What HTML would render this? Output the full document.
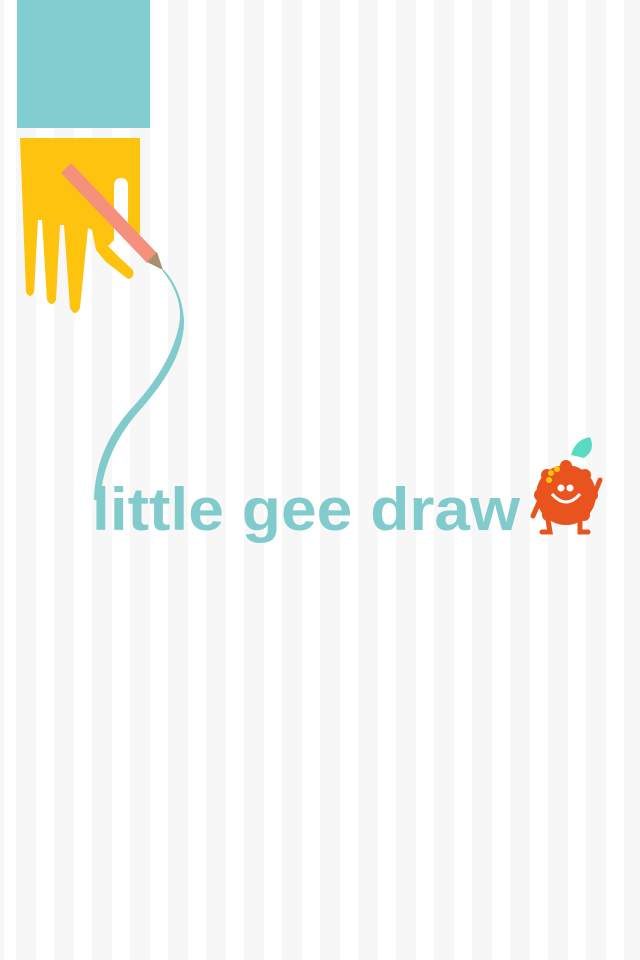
<!DOCTYPE html>
<html><head><style>
html,body{margin:0;padding:0}
body{width:640px;height:960px;overflow:hidden;background:#fff repeating-linear-gradient(90deg,#f7f7f7 0 20px,#fff 20px 38px);background-position:16px 0}
</style></head><body>
<svg width="640" height="960" style="position:absolute;left:0;top:0">
<rect x="17" y="0" width="133" height="128" fill="#82cdd0"/>
<g fill="#fdc30f">
<path d="M20 138 H140 V232 Q140 238 134 238 Q128 238 128 232 V186 Q128 178 121 178 Q114 178 114 186 V240 L108 246 L120 258 L133 270 Q135 278 128 279 L106 262 L96 250 L92 230 L88 228 L80 308 Q75 318 70 308 L64 225 L60 225 L56 300 Q52 308 47 300 L42 220 L38 220 L34 292 Q30 300 26 292 Z"/>
</g>
<path d="M66 168 L152 258" stroke="#f4907b" stroke-width="14"/>
<path d="M147 262 L157 252 L163 270 Z" fill="#a8906f"/>
<path d="M162 270 Q186 300 178 330 Q168 370 130 410 Q95 450 94 500 L100 500 Q104 450 140 410 Q185 360 184 320 Q182 290 164 270 Z" fill="#82cbcd"/>
<text x="92" y="530" textLength="428" lengthAdjust="spacingAndGlyphs" font-family="Liberation Sans, sans-serif" font-weight="bold" font-size="60" fill="#82cbcd">little gee draw</text>
<g>
<path d="M571 455 Q575 440 590 437 Q596 450 584 458 Z" fill="#5ad9c3"/>
<circle cx="566" cy="495" r="30" fill="#e9541e"/>
<g fill="#e9541e"><circle cx="547" cy="475" r="6"/><circle cx="585" cy="475" r="6"/><circle cx="540" cy="495" r="6"/><circle cx="592" cy="495" r="6"/><circle cx="566" cy="466" r="6"/><circle cx="548" cy="515" r="6"/><circle cx="584" cy="515" r="6"/></g>
<path d="M548 520 L550 532 L542 532 M580 520 L580 532 L588 532 M540 500 L533 516 M594 495 L600 480" stroke="#e9541e" stroke-width="5" fill="none" stroke-linecap="round"/>
<circle cx="551" cy="473" r="3" fill="#fdc30f"/><circle cx="557" cy="469" r="3" fill="#fdc30f"/><circle cx="549" cy="480" r="3" fill="#fdc30f"/>
<circle cx="561" cy="488" r="3.5" fill="#fff"/><circle cx="570" cy="488" r="3.5" fill="#fff"/>
<path d="M552 494 Q566 510 580 494" stroke="#fff" stroke-width="3" fill="none"/>
</g>
</svg>
</body></html>
